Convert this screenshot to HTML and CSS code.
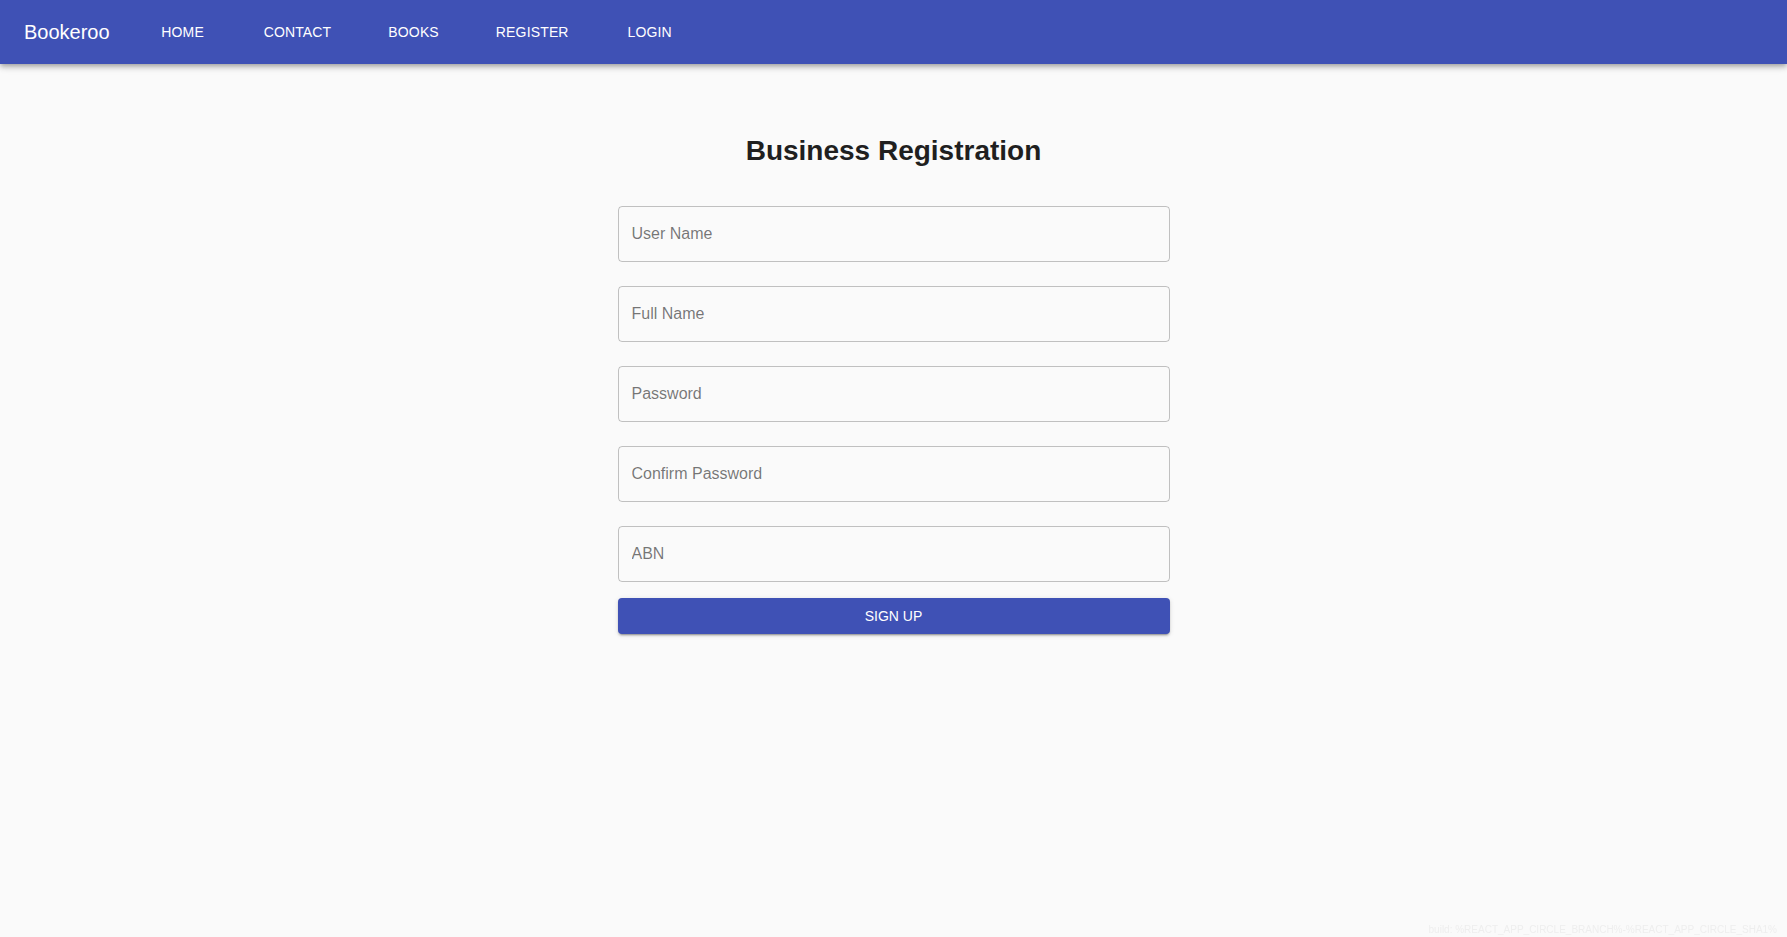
FILE: index.html
```html
<!DOCTYPE html>
<html lang="en">
<head>
<meta charset="utf-8">
<title>Bookeroo</title>
<link rel="stylesheet" href="styles.css">
</head>
<body>
<header class="appbar">
  <div class="toolbar">
    <a class="brand" href="#">Bookeroo</a>
    <nav class="nav">
      <a class="nav-btn" href="#">HOME</a>
      <a class="nav-btn" href="#">CONTACT</a>
      <a class="nav-btn" href="#">BOOKS</a>
      <a class="nav-btn" href="#">REGISTER</a>
      <a class="nav-btn" href="#">LOGIN</a>
    </nav>
  </div>
</header>
<main class="main">
  <div class="container">
    <h1 class="title">Business Registration</h1>
    <form class="form">
      <input class="field" type="text" placeholder="User Name">
      <input class="field" type="text" placeholder="Full Name">
      <input class="field" type="password" placeholder="Password">
      <input class="field" type="password" placeholder="Confirm Password">
      <input class="field" type="text" placeholder="ABN">
      <button class="submit" type="button">SIGN UP</button>
    </form>
  </div>
</main>
<div class="build">build: %REACT_APP_CIRCLE_BRANCH%-%REACT_APP_CIRCLE_SHA1%</div>
</body>
</html>
```
FILE: styles.css
```css
* { box-sizing: border-box; }
html, body { margin: 0; padding: 0; }
body {
  background: #fafafa;
  font-family: "Liberation Sans", Arial, sans-serif;
  color: rgba(0,0,0,0.87);
  min-height: 937px;
}
.appbar {
  background: #3f51b5;
  color: #fff;
  height: 64px;
  box-shadow: 0 2px 4px -1px rgba(0,0,0,0.2), 0 4px 5px 0 rgba(0,0,0,0.14), 0 1px 10px 0 rgba(0,0,0,0.12);
  position: relative;
  z-index: 2;
}
.toolbar {
  height: 64px;
  display: flex;
  align-items: center;
  padding: 0 24px;
  gap: 41px;
}
.brand {
  color: #fff;
  text-decoration: none;
  font-size: 20px;
  line-height: 24px;
}
.nav {
  display: flex;
  align-items: center;
  gap: 41px;
}
.nav-btn {
  color: #fff;
  text-decoration: none;
  font-size: 14px;
  letter-spacing: 0.15px;
  line-height: 24px;
  padding: 6px 8px;
  min-width: 64px;
  text-align: center;
  border-radius: 4px;
}
.main {
  padding-top: 71px;
  display: flex;
  justify-content: center;
}
.container {
  width: 552px;
}
.title {
  margin: 0 0 39px;
  font-size: 28px;
  line-height: 32px;
  font-weight: bold;
  text-align: center;
  color: #1f1f1f;
}
.form {
  display: flex;
  flex-direction: column;
  gap: 24px;
}
.field {
  width: 100%;
  height: 56px;
  padding: 18.5px 13px;
  font-family: "Liberation Sans", Arial, sans-serif;
  font-size: 16px;
  color: rgba(0,0,0,0.87);
  background: transparent;
  border: 1px solid rgba(0,0,0,0.23);
  border-radius: 4px;
  outline: none;
}
.field::placeholder {
  color: rgba(0,0,0,0.54);
  opacity: 1;
}
.submit {
  margin-top: -8px;
  height: 36px;
  width: 100%;
  background: #3f51b5;
  color: #fff;
  border: none;
  border-radius: 4px;
  font-family: "Liberation Sans", Arial, sans-serif;
  font-size: 14px;
  box-shadow: 0 3px 1px -2px rgba(0,0,0,0.2), 0 2px 2px 0 rgba(0,0,0,0.14), 0 1px 5px 0 rgba(0,0,0,0.12);
  cursor: pointer;
}
.build {
  position: fixed;
  right: 10px;
  bottom: 2px;
  font-size: 10px;
  color: #eeeeee;
}
```
